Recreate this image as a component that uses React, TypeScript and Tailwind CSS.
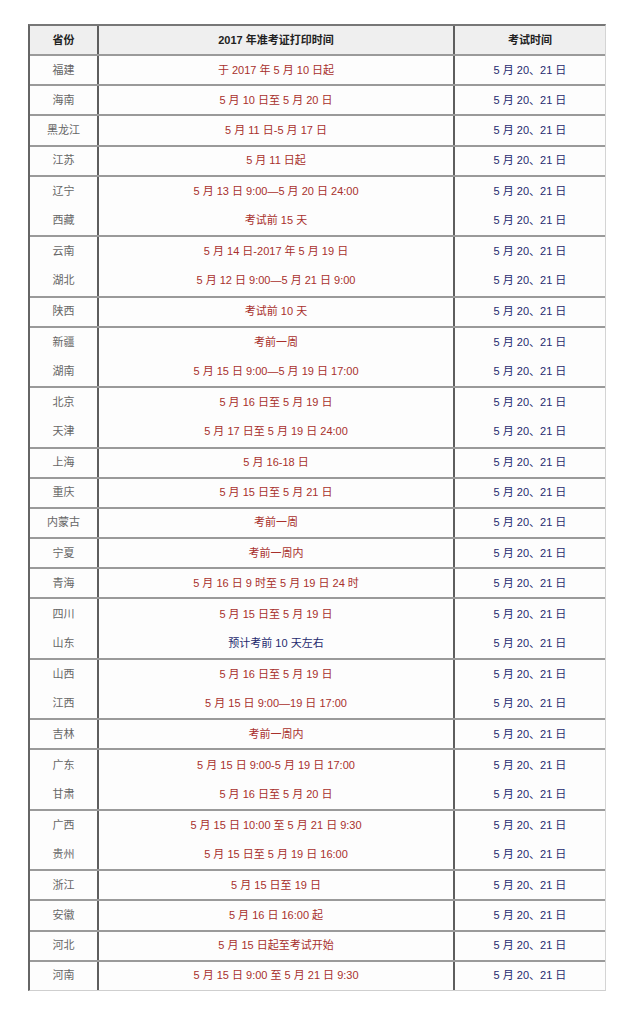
import React from 'react';

type Row = { province: string; print: string; navy?: boolean };

// rows that share one block have no line between them
const groups: Row[][] = [
  [{ province: '福建', print: '于 2017 年 5 月 10 日起' }],
  [{ province: '海南', print: '5 月 10 日至 5 月 20 日' }],
  [{ province: '黑龙江', print: '5 月 11 日-5 月 17 日' }],
  [{ province: '江苏', print: '5 月 11 日起' }],
  [
    { province: '辽宁', print: '5 月 13 日 9:00—5 月 20 日 24:00' },
    { province: '西藏', print: '考试前 15 天' },
  ],
  [
    { province: '云南', print: '5 月 14 日-2017 年 5 月 19 日' },
    { province: '湖北', print: '5 月 12 日 9:00—5 月 21 日 9:00' },
  ],
  [{ province: '陕西', print: '考试前 10 天' }],
  [
    { province: '新疆', print: '考前一周' },
    { province: '湖南', print: '5 月 15 日 9:00—5 月 19 日 17:00' },
  ],
  [
    { province: '北京', print: '5 月 16 日至 5 月 19 日' },
    { province: '天津', print: '5 月 17 日至 5 月 19 日 24:00' },
  ],
  [{ province: '上海', print: '5 月 16-18 日' }],
  [{ province: '重庆', print: '5 月 15 日至 5 月 21 日' }],
  [{ province: '内蒙古', print: '考前一周' }],
  [{ province: '宁夏', print: '考前一周内' }],
  [{ province: '青海', print: '5 月 16 日 9 时至 5 月 19 日 24 时' }],
  [
    { province: '四川', print: '5 月 15 日至 5 月 19 日' },
    { province: '山东', print: '预计考前 10 天左右', navy: true },
  ],
  [
    { province: '山西', print: '5 月 16 日至 5 月 19 日' },
    { province: '江西', print: '5 月 15 日 9:00—19 日 17:00' },
  ],
  [{ province: '吉林', print: '考前一周内' }],
  [
    { province: '广东', print: '5 月 15 日 9:00-5 月 19 日 17:00' },
    { province: '甘肃', print: '5 月 16 日至 5 月 20 日' },
  ],
  [
    { province: '广西', print: '5 月 15 日 10:00 至 5 月 21 日 9:30' },
    { province: '贵州', print: '5 月 15 日至 5 月 19 日 16:00' },
  ],
  [{ province: '浙江', print: '5 月 15 日至 19 日' }],
  [{ province: '安徽', print: '5 月 16 日 16:00 起' }],
  [{ province: '河北', print: '5 月 15 日起至考试开始' }],
  [{ province: '河南', print: '5 月 15 日 9:00 至 5 月 21 日 9:30' }],
];

const App: React.FC = () => {
  return (
    <div className="w-[640px] min-h-[1020px] bg-white pt-[24px] pl-[28px] font-['Liberation_Sans','Noto_Sans_CJK_SC',sans-serif] text-[11px] leading-none">
      <div className="w-[578px] border-t-2 border-l-2 border-t-[#777] border-l-[#666] border-r border-b border-r-[#d4d4d4] border-b-[#cfcfcf]">
        {/* header */}
        <div className="grid grid-cols-[69px_356px_1fr] h-[28px] bg-[#efefef] font-bold text-[#222]">
          <div className="flex items-center justify-center border-r-2 border-[#5e5e5e]">省份</div>
          <div className="flex items-center justify-center border-r-2 border-[#5e5e5e]">2017 年准考证打印时间</div>
          <div className="flex items-center justify-center">考试时间</div>
        </div>

        {groups.map((group, gi) => (
          <div
            key={gi}
            className={`grid grid-cols-[69px_356px_1fr] border-t-2 border-[#9a9a9a] bg-[#fdfdfd] ${
              group.length === 2 ? 'h-[60.4px]' : 'h-[30.2px]'
            }`}
          >
            <div className="flex flex-col border-r-2 border-[#5e5e5e] text-[#666]">
              {group.map((r) => (
                <div key={r.province} className="flex-1 flex items-center justify-center">
                  {r.province}
                </div>
              ))}
            </div>
            <div className="flex flex-col border-r-2 border-[#5e5e5e]">
              {group.map((r) => (
                <div
                  key={r.province}
                  className={`flex-1 flex items-center justify-center ${r.navy ? 'text-[#1f2a6e]' : 'text-[#a8302c]'}`}
                >
                  {r.print}
                </div>
              ))}
            </div>
            <div className="flex flex-col text-[#1f2a6e]">
              {group.map((r) => (
                <div key={r.province} className="flex-1 flex items-center justify-center">
                  5 月 20、21 日
                </div>
              ))}
            </div>
          </div>
        ))}
      </div>
    </div>
  );
};

export default App;
